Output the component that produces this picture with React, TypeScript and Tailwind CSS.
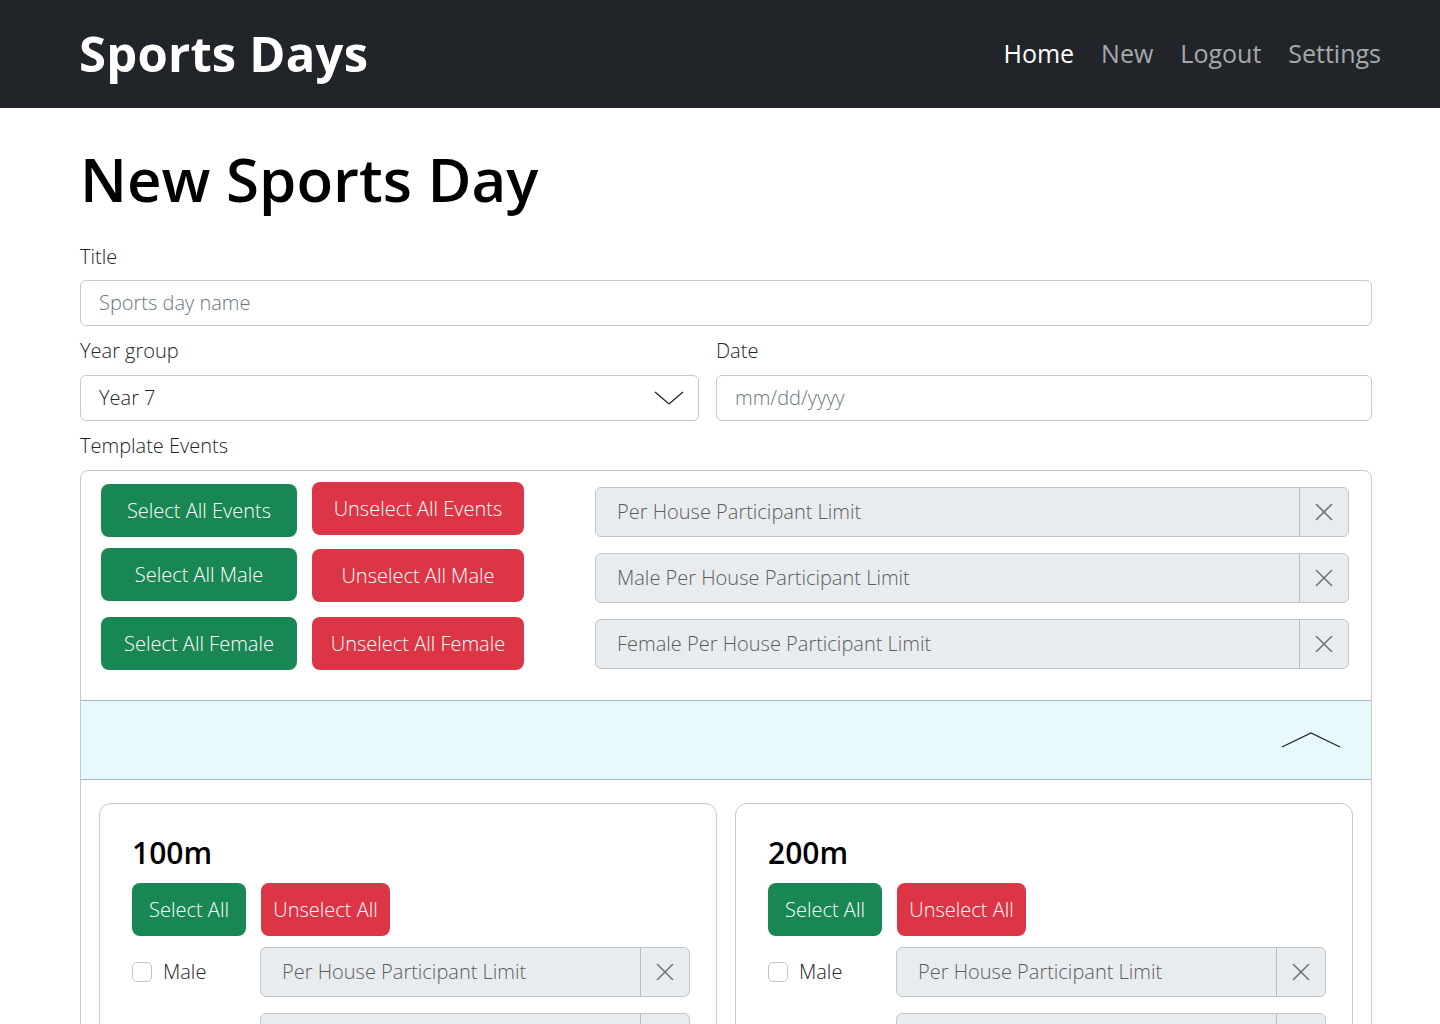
import { X } from "lucide-react";

const font = { fontFamily: '"Open Sans", "Liberation Sans", sans-serif' };

function ClearableInput({ placeholder, className = "" }: { placeholder: string; className?: string }) {
  return (
    <div className={`flex h-[50px] rounded-md border border-[#c3c7cb] bg-[#e9ecef] ${className}`}>
      <div className="flex flex-1 items-center px-[21px] text-[20px] font-light text-[#595d61]">{placeholder}</div>
      <div className="flex w-[49px] items-center justify-center border-l border-[#b8bcc0] text-[#6c757d]">
        <X size={30} strokeWidth={1.3} />
      </div>
    </div>
  );
}

function Btn({ children, tone, className = "" }: { children: React.ReactNode; tone: "green" | "red"; className?: string }) {
  const bg = tone === "green" ? "bg-[#198754]" : "bg-[#dc3545]";
  return (
    <div className={`flex h-[53px] items-center justify-center rounded-lg text-[20px] font-light text-white ${bg} ${className}`}>
      {children}
    </div>
  );
}

function EventCard({ name }: { name: string }) {
  return (
    <div className="flex-1 rounded-xl border border-[#c8c8c8] pl-[32px] pr-[26px] pt-[29px] pb-6">
      <h3 className="text-[30px] font-semibold leading-[40px] text-black">{name}</h3>
      <div className="mt-[10px] flex gap-[15px]">
        <Btn tone="green" className="w-[114px]">Select All</Btn>
        <Btn tone="red" className="w-[129px]">Unselect All</Btn>
      </div>
      <div className="mt-[11px] flex flex-col gap-4">
        <div className="flex items-center">
          <div className="flex w-[128px] items-center gap-[11px]">
            <span className="h-[20px] w-[20px] rounded-[5px] border border-[#c3c7cb] bg-white" />
            <span className="text-[20px] font-light text-[#212529]">Male</span>
          </div>
          <ClearableInput placeholder="Per House Participant Limit" className="flex-1" />
        </div>
        <div className="flex items-center">
          <div className="flex w-[128px] items-center gap-[11px]">
            <span className="h-[20px] w-[20px] rounded-[5px] border border-[#c3c7cb] bg-white" />
            <span className="text-[20px] font-light text-[#212529]">Female</span>
          </div>
          <ClearableInput placeholder="Per House Participant Limit" className="flex-1" />
        </div>
      </div>
    </div>
  );
}

export default function App() {
  return (
    <div style={font} className="min-h-screen bg-white text-[#212529]">
      <header className="flex h-[108px] items-center justify-between bg-[#212529] pl-[79px] pr-[59px]">
        <div className="text-[49px] font-bold tracking-[0.2px] text-white">Sports Days</div>
        <nav className="flex items-center gap-[27px] text-[25px] font-medium">
          <span className="text-white">Home</span>
          <span className="text-[#a6a8aa]">New</span>
          <span className="text-[#a6a8aa]">Logout</span>
          <span className="text-[#a6a8aa]">Settings</span>
        </nav>
      </header>

      <main className="pl-[80px] pr-[68px] pt-[34px]">
        <h1 className="text-[60px] font-semibold leading-[74px] text-black">New Sports Day</h1>

        <div className="mt-[26px]">
          <label className="block text-[20px] font-light leading-[30px]">Title</label>
          <div className="mt-[8px] flex h-[46px] items-center rounded-md border border-[#c8c8c8] px-[18px] text-[20px] font-light text-[#6c757d]">
            Sports day name
          </div>
        </div>

        <div className="mt-[10px] flex gap-[17px]">
          <div className="w-[619px]">
            <label className="block text-[20px] font-light leading-[30px]">Year group</label>
            <div className="mt-[9px] flex h-[46px] items-center justify-between rounded-md border border-[#c8c8c8] pl-[18px] pr-[14px] text-[20px] font-light">
              <span>Year 7</span>
              <svg width="30" height="14" viewBox="0 0 30 14" fill="none" stroke="#222" strokeWidth="1.3">
                <path d="M1 1 L15 13 L29 1" />
              </svg>
            </div>
          </div>
          <div className="flex-1">
            <label className="block text-[20px] font-light leading-[30px]">Date</label>
            <div className="mt-[9px] flex h-[46px] items-center rounded-md border border-[#c8c8c8] px-[18px] text-[20px] font-light text-[#6c757d]">
              mm/dd/yyyy
            </div>
          </div>
        </div>

        <label className="mt-[10px] block text-[20px] font-light leading-[30px]">Template Events</label>
        <div className="mt-[9px] overflow-hidden rounded-lg border border-[#c8c8c8]">
          <div className="flex gap-[71px] pl-[20px] pr-[22px] pt-[13px] pb-[30px]">
            <div className="grid grid-cols-[196px_212px] gap-x-[15px] gap-y-[11px]">
              <Btn tone="green">Select All Events</Btn>
              <Btn tone="red" className="-mt-[2px]">Unselect All Events</Btn>
              <Btn tone="green">Select All Male</Btn>
              <Btn tone="red" className="mt-[1px]">Unselect All Male</Btn>
              <Btn tone="green" className="mt-[4px]">Select All Female</Btn>
              <Btn tone="red" className="mt-[4px]">Unselect All Female</Btn>
            </div>
            <div className="flex flex-1 flex-col gap-4 pt-[3px]">
              <ClearableInput placeholder="Per House Participant Limit" />
              <ClearableInput placeholder="Male Per House Participant Limit" />
              <ClearableInput placeholder="Female Per House Participant Limit" />
            </div>
          </div>
          <div className="flex h-[80px] items-center justify-end border-y border-[#a8b4ba] bg-[#e7f9fd] pr-[30px]">
            <svg width="60" height="16" viewBox="0 0 60 16" fill="none" stroke="#222" strokeWidth="1.3">
              <path d="M1 15 L30 1 L59 15" />
            </svg>
          </div>
          <div className="flex gap-[18px] px-[18px] pt-[23px] pb-6">
            <EventCard name="100m" />
            <EventCard name="200m" />
          </div>
        </div>
      </main>
    </div>
  );
}
